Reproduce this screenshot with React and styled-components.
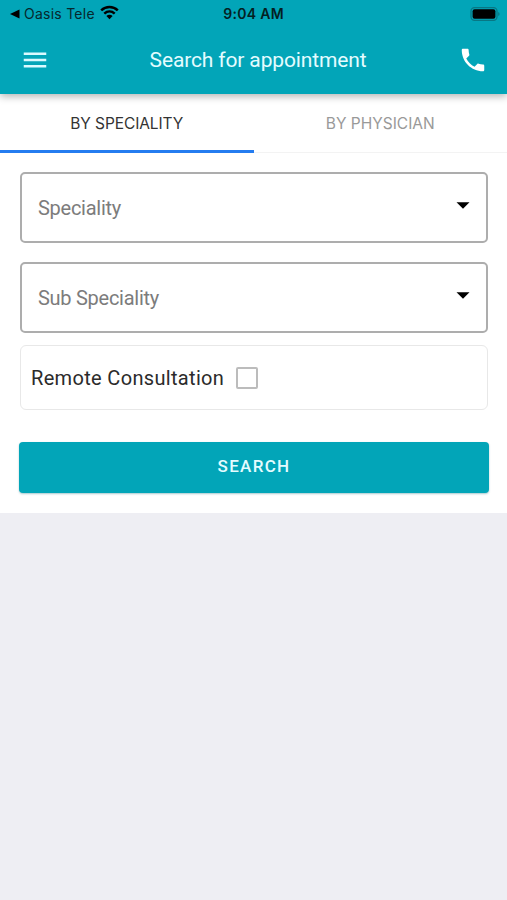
import React, { useState } from "react"
import styled, { createGlobalStyle } from "styled-components"

const GlobalStyle = createGlobalStyle`
  * {
    box-sizing: border-box;
  }

  body {
    margin: 0;
    background-color: #eeeef3;
    font-family: Roboto, "Liberation Sans", sans-serif;
  }

  button {
    padding: 0;
    border: none;
    background: none;
    font-family: inherit;
    cursor: pointer;
  }

  svg {
    display: block;
  }
`

const Screen = styled.div`
  min-height: 100vh;
  display: flex;
  flex-direction: column;
  background-color: #eeeef3;
`

const Header = styled.header`
  height: 94px;
  position: relative;
  background-color: #02a5b8;
  box-shadow: 0 2px 8px rgba(0, 0, 0, 0.32);
`

const StatusBar = styled.div`
  height: 27px;
  display: grid;
  grid-template-columns: 1fr auto 1fr;
  align-items: center;
  padding: 0 7px 0 10px;
  color: #06282d;
  font-family: Inter, "Liberation Sans", sans-serif;
`

const BackToApp = styled.div`
  display: flex;
  align-items: center;
  font-size: 14px;
  letter-spacing: 0.25px;

  .arrow {
    margin-right: 4px;
  }

  .wifi {
    margin: -2px 0 0 5px;
  }
`

const Clock = styled.div`
  margin-left: -3px;
  color: #041f23;
  font-size: 14px;
  font-weight: 600;
  letter-spacing: 0.3px;
`

const Battery = styled.svg`
  justify-self: end;
`

const Toolbar = styled.div`
  height: 66px;
  display: flex;
  align-items: center;
  justify-content: space-between;
  padding: 0 19px 0 20px;
`

const Title = styled.h1`
  margin: 0 0 0 8px;
  color: #e4fcff;
  font-size: 21px;
  font-weight: 400;
  letter-spacing: -0.14px;
`

const IconButton = styled.button`
  width: 30px;
  height: 30px;
  color: ${({ $color }) => $color};
`

const Panel = styled.main`
  height: 419px;
  background-color: #fff;
`

const Tabs = styled.div`
  height: 59px;
  display: flex;
  border-bottom: 1px solid #f3f3f3;
`

const Tab = styled.button`
  height: 59px;
  flex: 1;
  padding-top: 2px;
  border-bottom: 3px solid ${({ $active }) => ($active ? "#247cf0" : "transparent")};
  color: ${({ $active }) => ($active ? "#333" : "#999")};
  font-family: Inter, "Liberation Sans", sans-serif;
  font-size: 15.5px;
  letter-spacing: ${({ $active }) => ($active ? "-0.1px" : "0")};
`

const Form = styled.div`
  display: flex;
  flex-direction: column;
  padding: 19px 19px 0 20px;
`

const Select = styled.button`
  height: 71px;
  display: flex;
  align-items: center;
  justify-content: space-between;
  margin-bottom: ${({ $gap }) => $gap}px;
  padding: 1px 16px 0 16px;
  border: 2px solid #adadad;
  border-radius: 5px;
  color: #7c7c7c;
  font-size: 20px;
  letter-spacing: -0.27px;
  text-align: left;

  svg {
    margin-top: -5px;
  }
`

const Remote = styled.label`
  height: 65px;
  display: flex;
  align-items: center;
  padding-left: 10px;
  border: 1px solid #e8e8e8;
  border-radius: 6px;
  color: #2b2b2b;
  font-size: 20px;
  letter-spacing: 0.33px;
`

const Checkbox = styled.input`
  width: 22px;
  height: 22px;
  margin: 0 0 0 12px;
  appearance: none;
  border: 2px solid #bcbcbc;
  border-radius: 2px;

  &:checked {
    background-color: #02a5b8;
  }
`

const SearchButton = styled.button`
  height: 51px;
  margin: 32px -1px 0;
  padding-bottom: 3px;
  border-radius: 4px;
  background-color: #02a5b8;
  box-shadow: 0 1px 2px rgba(2, 100, 115, 0.35);
  color: #e4fcff;
  font-size: 17px;
  font-weight: 500;
  letter-spacing: 1.3px;
`

const WifiIcon = () => (
  <svg className="wifi" width="19" height="15" viewBox="0 0 19 15">
    <g fill="none" stroke="#000" strokeWidth="2.5">
      <path d="M1.2 5.4C6 0.9 13 0.9 17.8 5.4" />
      <path d="M4.3 8.6C7.4 5.8 11.6 5.8 14.7 8.6" />
    </g>
    <path d="M9.5 14.2L6.4 11C8.1 9.4 10.9 9.4 12.6 11Z" />
  </svg>
)

const Caret = () => (
  <svg width="14" height="7" viewBox="0 0 14 7">
    <path d="M0.5 0.2H13.5L7 6.8Z" />
  </svg>
)

const TABS = ["BY SPECIALITY", "BY PHYSICIAN"]

const App = () => {
  const [tab, setTab] = useState(0)

  return (
    <Screen>
      <GlobalStyle />
      <Header>
        <StatusBar>
          <BackToApp>
            <svg className="arrow" width="10" height="10" viewBox="0 0 10 10">
              <path d="M0 5L9.5 0.5V9.5Z" />
            </svg>
            Oasis Tele
            <WifiIcon />
          </BackToApp>
          <Clock>9:04 AM</Clock>
          <Battery width="30" height="14" viewBox="0 0 30 14">
            <rect x="1" y="0.7" width="26" height="12.6" rx="3.5" fill="none" stroke="#087784" strokeWidth="1.3" />
            <rect x="2.6" y="2.3" width="22.8" height="9.4" rx="2" />
            <path d="M28.2 5V9Q29.6 8.5 29.6 7T28.2 5" fill="#087784" />
          </Battery>
        </StatusBar>
        <Toolbar>
          <IconButton $color="#d9faff" aria-label="Menu">
            <svg width="30" height="30" viewBox="0 0 24 24" fill="currentColor">
              <path d="M3 18h18v-2H3v2zm0-5h18v-2H3v2zm0-7v2h18V6H3z" />
            </svg>
          </IconButton>
          <Title>Search for appointment</Title>
          <IconButton $color="#fff" aria-label="Call">
            <svg width="30" height="30" viewBox="0 0 24 24" fill="currentColor">
              <path d="M6.62 10.79c1.44 2.83 3.76 5.14 6.59 6.59l2.2-2.2c.27-.27.67-.36 1.02-.24 1.12.37 2.33.57 3.57.57.55 0 1 .45 1 1V20c0 .55-.45 1-1 1-9.39 0-17-7.61-17-17 0-.55.45-1 1-1h3.5c.55 0 1 .45 1 1 0 1.25.2 2.45.57 3.57.11.35.03.74-.25 1.02l-2.2 2.2z" />
            </svg>
          </IconButton>
        </Toolbar>
      </Header>
      <Panel>
        <Tabs>
          {TABS.map((label, i) => (
            <Tab key={label} $active={tab === i} onClick={() => setTab(i)}>
              {label}
            </Tab>
          ))}
        </Tabs>
        <Form>
          <Select $gap={19}>
            Speciality
            <Caret />
          </Select>
          <Select $gap={12}>
            Sub Speciality
            <Caret />
          </Select>
          <Remote>
            Remote Consultation
            <Checkbox type="checkbox" />
          </Remote>
          <SearchButton>SEARCH</SearchButton>
        </Form>
      </Panel>
    </Screen>
  )
}

export default App
